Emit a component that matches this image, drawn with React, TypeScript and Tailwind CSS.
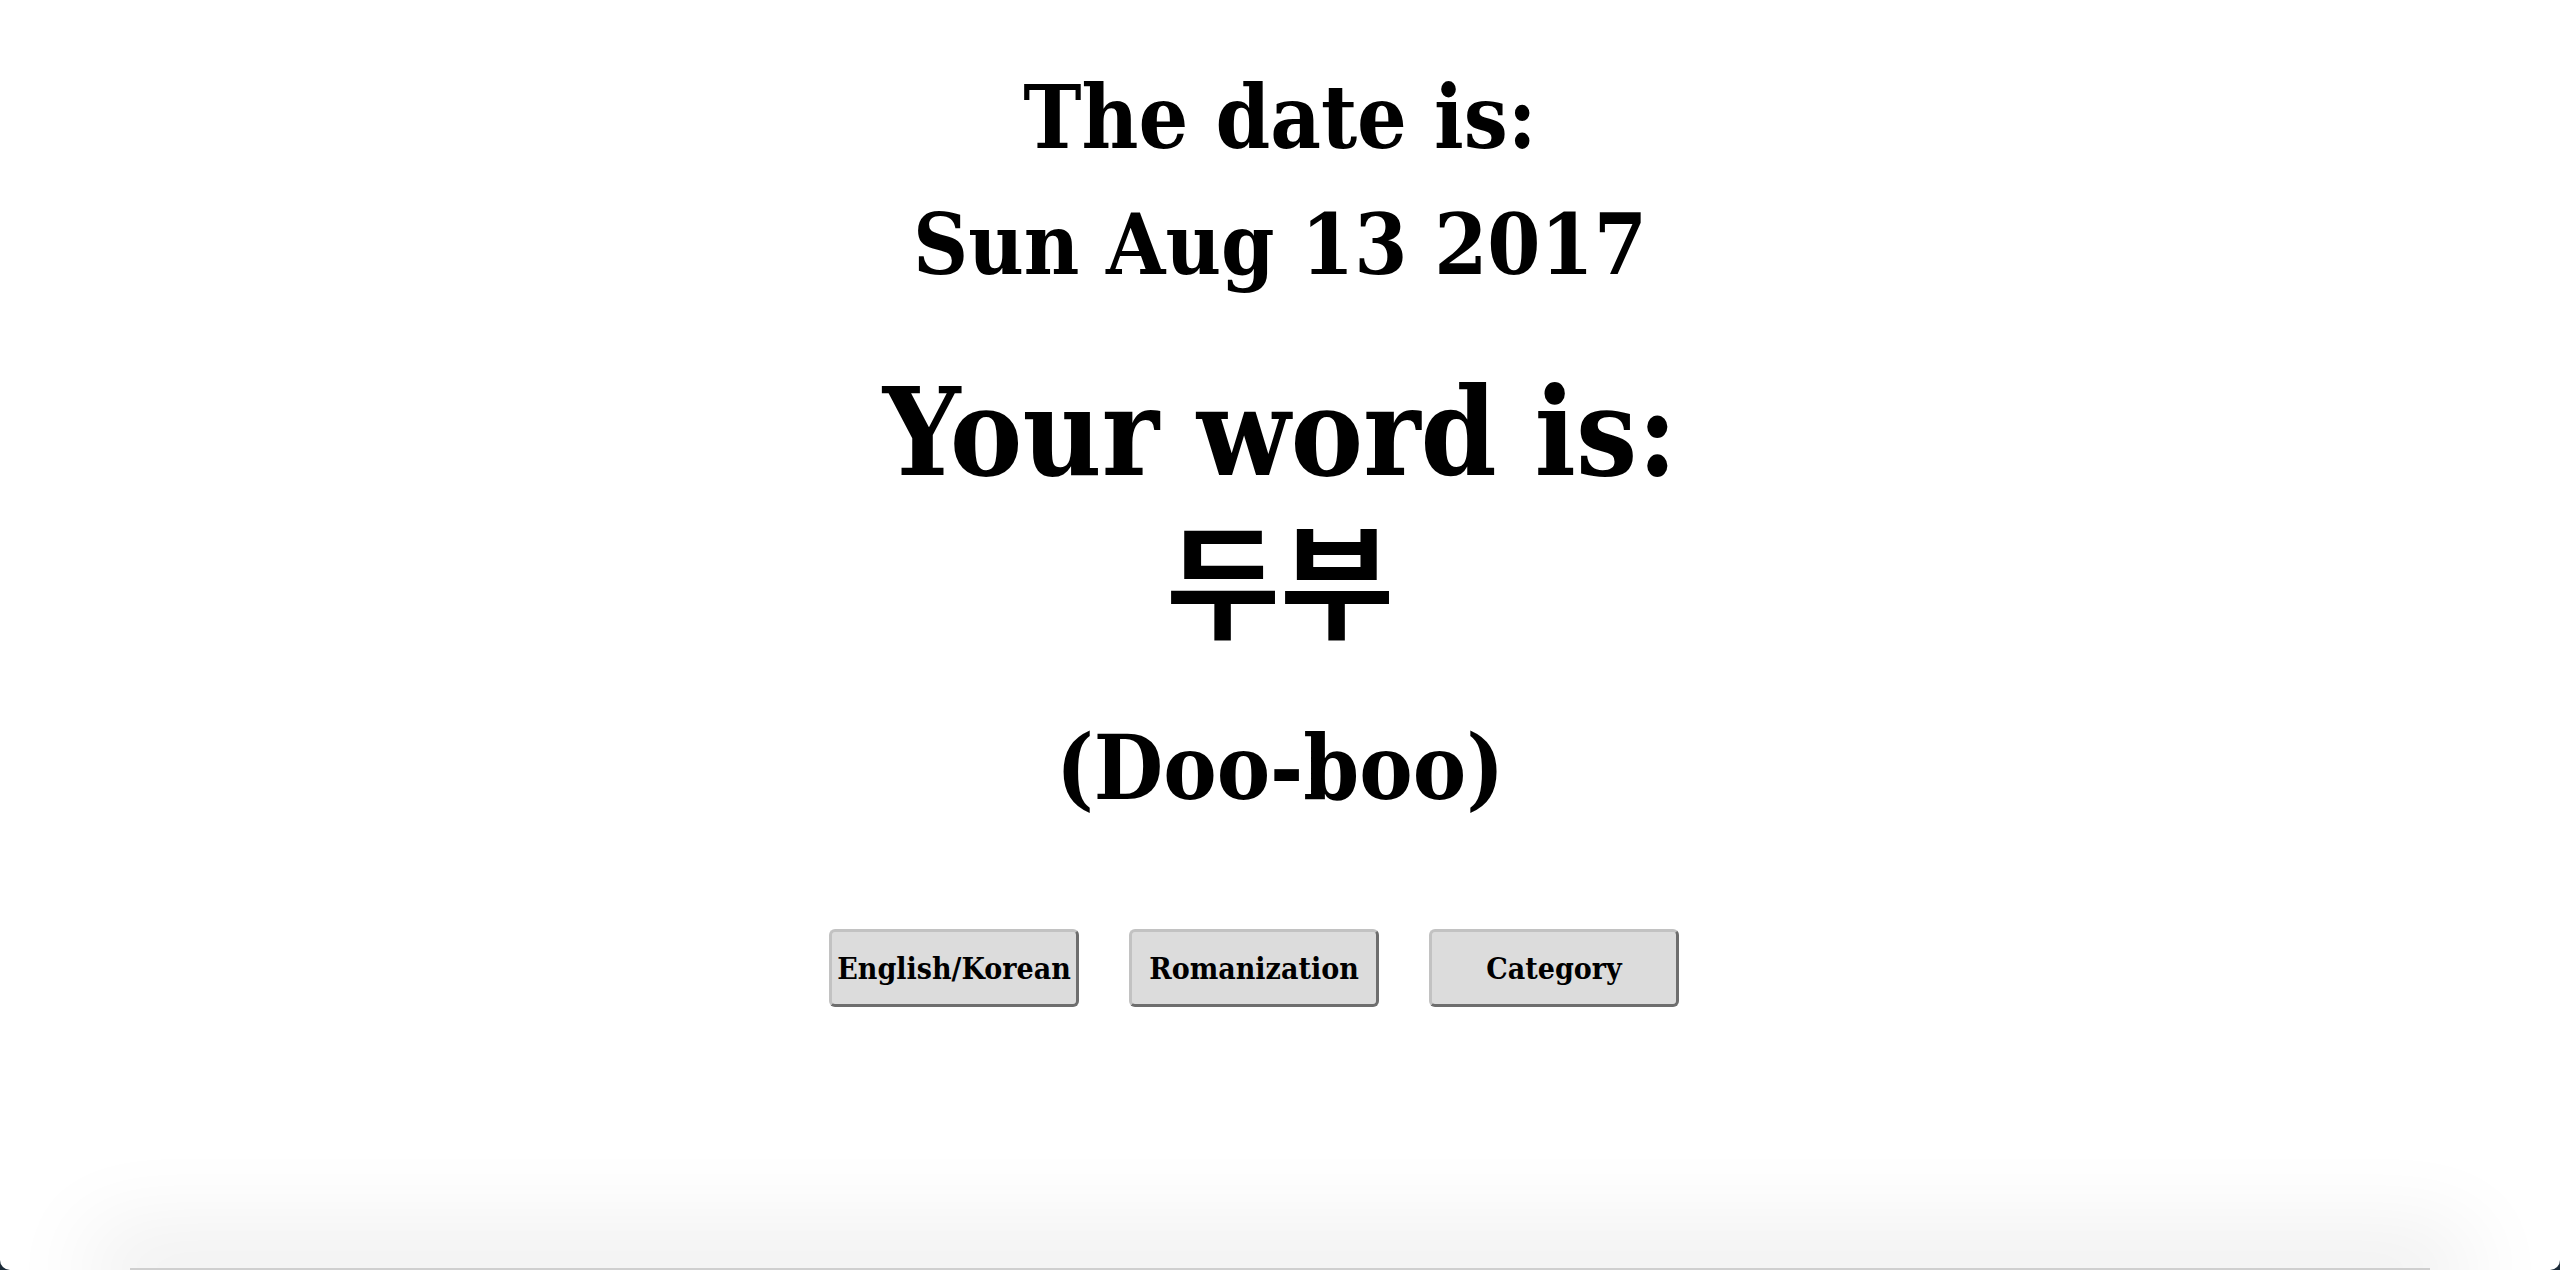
export default function App() {
  const slab = { fontFamily: '"DejaVu Serif Condensed", "DejaVu Serif", serif' };

  return (
    <div className="bg-[#1b2a38]">
      <main
        className="relative flex h-[1270px] flex-col items-center overflow-hidden rounded-b-[10px] bg-white text-black"
        style={slab}
      >
        <h2 className="mt-[55px] text-center text-[87px] font-bold leading-[126px]">
          The date is:
          <br />
          <span className="text-[85px]">Sun Aug 13 2017</span>
        </h2>

        <h1 className="mt-[70px] text-center text-[121px] font-bold leading-[112px]">
          Your word is:
        </h1>
        <div
          className="mt-[24px] text-center text-[124px] font-bold leading-[124px]"
          style={{ fontFamily: '"Noto Sans CJK KR", sans-serif' }}
        >
          두부
        </div>

        <div className="mt-[76px] text-center text-[89px] font-bold leading-[110px]">
          (Doo-boo)
        </div>

        <div className="mt-[106px] mr-[52px] flex gap-[50px]">
          {["English/Korean", "Romanization", "Category"].map((label) => (
            <button
              key={label}
              className="flex h-[78px] w-[250px] items-center justify-center whitespace-nowrap rounded-[6px] border-[3px] border-t-[#c2c2c2] border-l-[#c2c2c2] border-b-[#6e6e6e] border-r-[#6e6e6e] bg-[#dcdcdc] px-0 text-[30px] font-bold text-black"
            >
              {label}
            </button>
          ))}
        </div>

        <div className="mt-auto mx-[130px] h-[2px] w-[2300px] bg-[#cfcfcf] shadow-[0_0_90px_40px_rgba(0,0,0,0.07)]" />
      </main>
    </div>
  );
}
